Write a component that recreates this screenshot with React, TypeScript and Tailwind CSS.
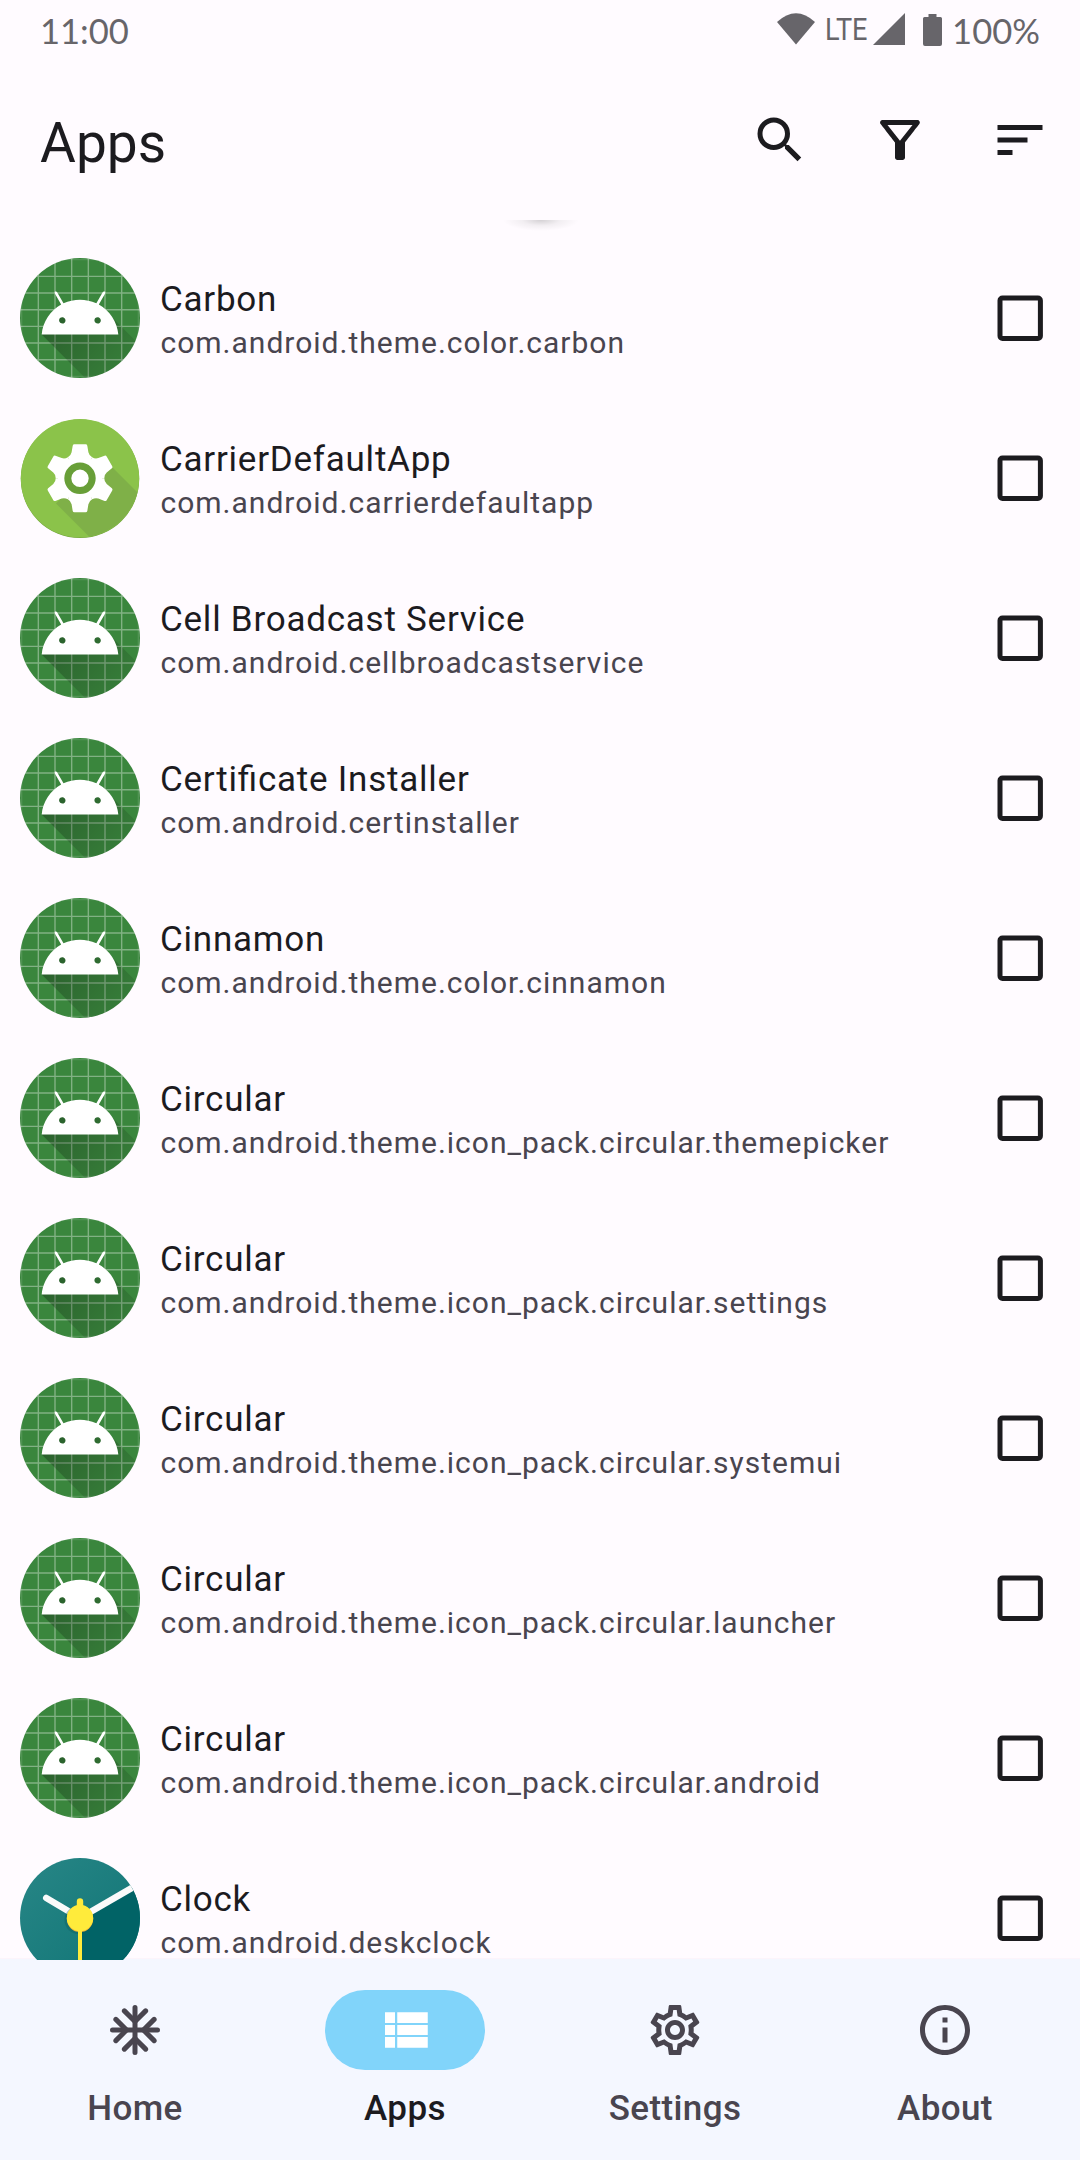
import React from "react";
import { MdOutlineFilterAlt, MdOutlineInfo, MdOutlineSettings, MdSearch, MdSort } from "react-icons/md";

type IconKind = "android" | "carrier" | "clock";

const apps: { name: string; pkg: string; icon: IconKind }[] = [
  { name: "Carbon", pkg: "com.android.theme.color.carbon", icon: "android" },
  { name: "CarrierDefaultApp", pkg: "com.android.carrierdefaultapp", icon: "carrier" },
  { name: "Cell Broadcast Service", pkg: "com.android.cellbroadcastservice", icon: "android" },
  { name: "Certificate Installer", pkg: "com.android.certinstaller", icon: "android" },
  { name: "Cinnamon", pkg: "com.android.theme.color.cinnamon", icon: "android" },
  { name: "Circular", pkg: "com.android.theme.icon_pack.circular.themepicker", icon: "android" },
  { name: "Circular", pkg: "com.android.theme.icon_pack.circular.settings", icon: "android" },
  { name: "Circular", pkg: "com.android.theme.icon_pack.circular.systemui", icon: "android" },
  { name: "Circular", pkg: "com.android.theme.icon_pack.circular.launcher", icon: "android" },
  { name: "Circular", pkg: "com.android.theme.icon_pack.circular.android", icon: "android" },
  { name: "Clock", pkg: "com.android.deskclock", icon: "clock" },
];

/* Gradients and clips shared by every app icon. */
function IconDefs() {
  return (
    <svg className="absolute h-0 w-0" aria-hidden="true">
      <defs>
        <clipPath id="mask72"><circle cx="54" cy="54" r="36" /></clipPath>
        <clipPath id="mask120"><circle cx="60" cy="60" r="59.2" /></clipPath>
        <clipPath id="maskClock"><circle cx="60" cy="60" r="60" /></clipPath>
        <linearGradient id="robotShadow" gradientUnits="userSpaceOnUse" x1="42.9492" y1="49.59793" x2="85.84757" y2="92.4963">
          <stop offset="0" stopColor="#000" stopOpacity="0.28" />
          <stop offset="1" stopColor="#000" stopOpacity="0.02" />
        </linearGradient>
        <linearGradient id="clockFace" x1="0" y1="0" x2="1" y2="1">
          <stop offset="0" stopColor="#288686" />
          <stop offset="1" stopColor="#0f7475" />
        </linearGradient>
      </defs>
    </svg>
  );
}

function AndroidIcon() {
  return (
    <svg viewBox="18 18 72 72" className="size-[120px] shrink-0">
      <g clipPath="url(#mask72)">
        <rect x="18" y="18" width="72" height="72" fill="#3a863d" />
        <path
          d="M29 18V90M39 18V90M49 18V90M59 18V90M69 18V90M79 18V90M18 29H90M18 39H90M18 49H90M18 59H90M18 69H90M18 79H90"
          stroke="#fff"
          strokeOpacity="0.36"
          strokeWidth="0.85"
        />
        <path d="M19 18V90M89 18V90M18 19H90M18 89H90" stroke="#fff" strokeOpacity="0.12" strokeWidth="0.8" />
        <path d="M31,63.928c0,0 6.4,-11 12.1,-13.1c7.2,-2.6 26,-1.4 26,-1.4l38.1,38.1L107,108.928l-32,-1L31,63.928z" fill="url(#robotShadow)" />
        <path
          fill="#fff"
          d="M65.3,45.828l3.8,-6.6c0.2,-0.4 0.1,-0.9 -0.3,-1.1c-0.4,-0.2 -0.9,-0.1 -1.1,0.3l-3.9,6.7c-6.3,-2.8 -13.4,-2.8 -19.7,0l-3.9,-6.7c-0.2,-0.4 -0.7,-0.5 -1.1,-0.3C38.8,38.328 38.7,38.828 38.9,39.228l3.8,6.6C36.2,49.428 31.7,56.028 31,63.928h46C76.3,56.028 71.8,49.428 65.3,45.828zM43.4,57.328c-0.8,0 -1.5,-0.5 -1.8,-1.2c-0.3,-0.7 -0.1,-1.5 0.4,-2.1c0.5,-0.5 1.4,-0.7 2.1,-0.4c0.7,0.3 1.2,1 1.2,1.8C45.3,56.528 44.5,57.328 43.4,57.328zM64.6,57.328c-0.8,0 -1.5,-0.5 -1.8,-1.2s-0.1,-1.5 0.4,-2.1c0.5,-0.5 1.4,-0.7 2.1,-0.4c0.7,0.3 1.2,1 1.2,1.8C66.5,56.528 65.6,57.328 64.6,57.328z"
        />
      </g>
    </svg>
  );
}

const toothAngles = [0, 60, 120, 180, 240, 300];

function CarrierIcon() {
  return (
    <svg viewBox="0 0 120 120" className="size-[120px] shrink-0">
      <circle cx="60" cy="60.8" r="59.2" fill="#6fa03b" />
      <circle cx="60" cy="60.3" r="59.2" fill="#8bc34a" />
      <path clipPath="url(#mask120)" d="M36 85.5L60 60L92 49L122 79V120H70.5z" fill="#7fb048" />
      <g transform="translate(60 60.3)" fill="#fff">
        {toothAngles.map((a) => (
          <path
            key={a}
            transform={`rotate(${a})`}
            d="M0 0L-12.15 -21.04Q-9 -22.8 -8.4 -26L-7.3 -32.6Q-7 -34 -5.6 -34H5.6Q7 -34 7.3 -32.6L8.4 -26Q9 -22.8 12.15 -21.04z"
          />
        ))}
        <circle r="22" />
        <circle r="12.2" fill="none" stroke="#689f38" strokeWidth="7" />
      </g>
    </svg>
  );
}

function ClockIcon() {
  return (
    <svg viewBox="0 0 120 120" className="size-[120px] shrink-0">
      <g clipPath="url(#maskClock)">
        <rect width="120" height="120" fill="url(#clockFace)" />
        <path d="M60 60L120 26V120H60z" fill="#016366" />
        <path d="M60 60L26.3 40" stroke="#fafafa" strokeWidth="6.6" strokeLinecap="round" />
        <path d="M60 60L118 26.4" stroke="#fafafa" strokeWidth="6.6" />
        <circle cx="58.5" cy="62" r="14" fill="#0c5b5d" fillOpacity="0.35" />
        <circle cx="60" cy="60.8" r="13.2" fill="#f2b53a" />
        <path d="M60 43.5V60" stroke="#ffeb3b" strokeWidth="6.4" strokeLinecap="round" />
        <path d="M60 60V120" stroke="#ffeb3b" strokeWidth="4" />
        <circle cx="60" cy="60" r="13.2" fill="#ffeb3b" />
      </g>
    </svg>
  );
}

function AppIcon({ kind }: { kind: IconKind }) {
  if (kind === "carrier") return <CarrierIcon />;
  if (kind === "clock") return <ClockIcon />;
  return <AndroidIcon />;
}

function SnowflakeIcon() {
  return (
    <svg viewBox="0 0 24 24" className="size-[60px]" fill="none" stroke="currentColor" strokeWidth="2" strokeLinecap="round">
      <path d="M12 3V21M3 12H21" />
      <path d="M7.75 4.35L12 8.6L16.25 4.35M7.75 19.65L12 15.4L16.25 19.65M4.35 7.75L8.6 12L4.35 16.25M19.65 7.75L15.4 12L19.65 16.25" />
    </svg>
  );
}

function ListIcon() {
  return (
    <svg viewBox="0 0 24 24" className="size-[60px]" fill="currentColor">
      <path d="M4 4.9h4v4.3H4zM8.9 4.9h12.2v4.3H8.9zM4 10h4v4H4zM8.9 10h12.2v4H8.9zM4 14.8h4v4.3H4zM8.9 14.8h12.2v4.3H8.9z" />
    </svg>
  );
}

function StatusBar() {
  return (
    <div className="flex h-[60px] items-center justify-between px-10 font-['Lato'] text-[34.6px] text-[#67656a]">
      <span className="pt-[1px] leading-[62px]">11:00</span>
      <div className="flex h-full items-center">
        <svg viewBox="0 0 38 32" className="mb-[2px] h-8 w-[38px]" fill="currentColor">
          <path d="M0 9Q19 -8.5 38 9L19 31.5z" />
        </svg>
        <div className="ml-[10px] w-[43px]">
          <span className="inline-block origin-left scale-x-[0.86] font-['Roboto'] text-[31.5px] leading-[58px]">LTE</span>
        </div>
        <svg viewBox="0 0 32 32" className="mb-[2px] ml-[5px] size-8" fill="currentColor">
          <path d="M32 0V32H0z" />
        </svg>
        <svg viewBox="0 0 19 32" className="mb-[1px] ml-[18px] h-8 w-[19px]" fill="currentColor">
          <path d="M5.5 0H13.5V3H17.5Q19 3 19 4.5V30Q19 32 17 32H2Q0 32 0 30V4.5Q0 3 1.5 3H5.5z" />
        </svg>
        <span className="ml-[10px] pt-[1px] leading-[62px]">100%</span>
      </div>
    </div>
  );
}

function Toolbar() {
  return (
    <header className="flex h-[160px] items-center justify-between pl-10 pr-[30px] text-[#1c1b1f]">
      <h1 className="pt-[6px] text-[55px] leading-[70px]">Apps</h1>
      <div className="flex gap-[60px]">
        <MdSearch className="size-[60px]" />
        <MdOutlineFilterAlt className="size-[60px]" />
        <MdSort className="size-[60px]" />
      </div>
    </header>
  );
}

function AppRow({ name, pkg, icon }: { name: string; pkg: string; icon: IconKind }) {
  return (
    <li className="flex h-[160px] items-center pl-5 pr-[37.5px]">
      <AppIcon kind={icon} />
      <div className="ml-5 grow">
        <div className="pt-[4px] text-[35px] leading-[46px] tracking-[0.76px] text-[#1c1b1f] [font-feature-settings:'liga'_1]">{name}</div>
        <div className="pl-[0.5px] text-[30px] leading-[40px] tracking-[1px] text-[#49454f]">{pkg}</div>
      </div>
      <svg viewBox="0 0 46 46" className="mb-[1px] size-[46px]" fill="none">
        <rect x="3" y="3" width="40.4" height="40.4" rx="2.5" stroke="#1c1b1f" strokeWidth="5" />
      </svg>
    </li>
  );
}

function NavItem({ label, active, children }: { label: string; active?: boolean; children: React.ReactNode }) {
  return (
    <div className={active ? "flex flex-col items-center text-[#1c1b1f]" : "flex flex-col items-center text-[#49454f]"}>
      <div
        className={
          active
            ? "flex h-20 w-40 items-center justify-center rounded-full bg-[#81d4fa] text-white"
            : "flex h-20 w-40 items-center justify-center"
        }
      >
        {children}
      </div>
      <span className="mt-[14px] text-[35px] font-medium leading-[50px] tracking-[0.4px]">{label}</span>
    </div>
  );
}

export default function App() {
  return (
    <div className="relative flex h-[2160px] w-[1080px] flex-col overflow-hidden bg-[#fffbff] font-['Roboto',sans-serif]">
      <IconDefs />
      <StatusBar />
      <Toolbar />
      <main className="relative h-[1740px] overflow-hidden">
        <div className="absolute bottom-0 left-0 h-[2px] w-full border-b border-[#f4f7ff] bg-[#fcf4fb]" />
        <div className="absolute left-[501px] top-0 h-3 w-20 bg-[radial-gradient(ellipse_38px_11px_at_50%_0%,rgba(0,0,0,0.17),rgba(0,0,0,0.05)_50%,transparent)]" />
        <ul className="relative pt-[18px]">
          {apps.map((app) => (
            <AppRow key={app.pkg} {...app} />
          ))}
        </ul>
      </main>
      <nav className="grid h-[200px] grid-cols-4 bg-[#f4f7ff] pt-[30px]">
        <NavItem label="Home"><SnowflakeIcon /></NavItem>
        <NavItem label="Apps" active><ListIcon /></NavItem>
        <NavItem label="Settings"><MdOutlineSettings className="size-[60px]" /></NavItem>
        <NavItem label="About"><MdOutlineInfo className="size-[60px]" /></NavItem>
      </nav>
    </div>
  );
}
